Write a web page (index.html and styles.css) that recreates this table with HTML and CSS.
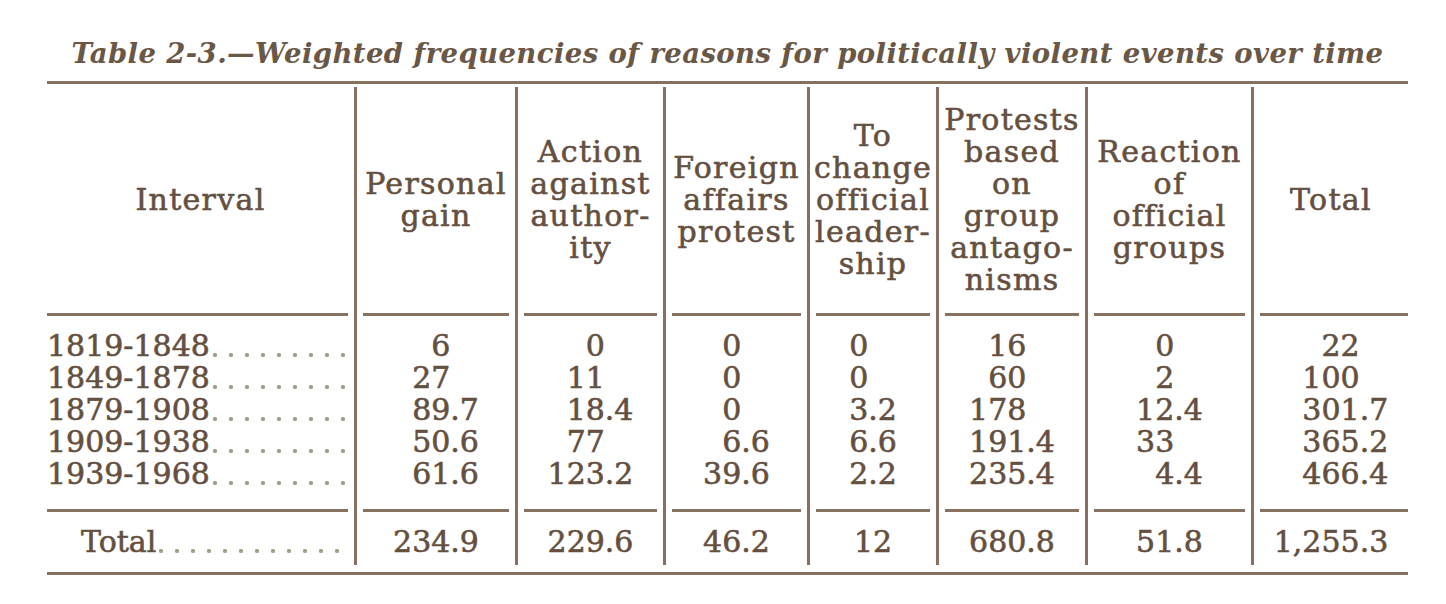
FILE: index.html
```html
<!DOCTYPE html>
<html lang="en">
<head>
<meta charset="utf-8">
<title>Table 2-3</title>
<link rel="stylesheet" href="styles.css">
</head>
<body>
<div class="page">
  <div class="title">Table 2-3.—Weighted frequencies of reasons for politically violent events over time</div>
  <div class="table">
    <div class="col c1">
      <div class="head">Interval</div>
      <div class="rule"></div>
      <div class="labels">
        <div class="lrow"><span>1819-1848</span><span class="lead"></span></div>
        <div class="lrow"><span>1849-1878</span><span class="lead"></span></div>
        <div class="lrow"><span>1879-1908</span><span class="lead"></span></div>
        <div class="lrow"><span>1909-1938</span><span class="lead"></span></div>
        <div class="lrow"><span>1939-1968</span><span class="lead"></span></div>
      </div>
      <div class="rule mid"></div>
      <div class="lrow tot"><span>Total</span><span class="lead"></span></div>
    </div>

    <div class="col c2">
      <div class="head">Personal<br>gain</div>
      <div class="rule"></div>
      <div class="nums">
        <span class="i">6</span><span class="f"></span>
        <span class="i">27</span><span class="f"></span>
        <span class="i">89</span><span class="f">.7</span>
        <span class="i">50</span><span class="f">.6</span>
        <span class="i">61</span><span class="f">.6</span>
        <div class="rule mid"></div>
        <span class="i">234</span><span class="f">.9</span>
      </div>
    </div>

    <div class="col c3">
      <div class="head">Action<br>against<br>author-<br>ity</div>
      <div class="rule"></div>
      <div class="nums">
        <span class="i">0</span><span class="f"></span>
        <span class="i">11</span><span class="f"></span>
        <span class="i">18</span><span class="f">.4</span>
        <span class="i">77</span><span class="f"></span>
        <span class="i">123</span><span class="f">.2</span>
        <div class="rule mid"></div>
        <span class="i">229</span><span class="f">.6</span>
      </div>
    </div>

    <div class="col c4">
      <div class="head">Foreign<br>affairs<br>protest</div>
      <div class="rule"></div>
      <div class="nums">
        <span class="i">0</span><span class="f"></span>
        <span class="i">0</span><span class="f"></span>
        <span class="i">0</span><span class="f"></span>
        <span class="i">6</span><span class="f">.6</span>
        <span class="i">39</span><span class="f">.6</span>
        <div class="rule mid"></div>
        <span class="i">46</span><span class="f">.2</span>
      </div>
    </div>

    <div class="col c5">
      <div class="head">To<br>change<br>official<br>leader-<br>ship</div>
      <div class="rule"></div>
      <div class="nums">
        <span class="i">0</span><span class="f"></span>
        <span class="i">0</span><span class="f"></span>
        <span class="i">3</span><span class="f">.2</span>
        <span class="i">6</span><span class="f">.6</span>
        <span class="i">2</span><span class="f">.2</span>
        <div class="rule mid"></div>
        <span class="whole">12</span>
      </div>
    </div>

    <div class="col c6">
      <div class="head">Protests<br>based<br>on<br>group<br>antago-<br>nisms</div>
      <div class="rule"></div>
      <div class="nums">
        <span class="i">16</span><span class="f"></span>
        <span class="i">60</span><span class="f"></span>
        <span class="i">178</span><span class="f"></span>
        <span class="i">191</span><span class="f">.4</span>
        <span class="i">235</span><span class="f">.4</span>
        <div class="rule mid"></div>
        <span class="i">680</span><span class="f">.8</span>
      </div>
    </div>

    <div class="col c7">
      <div class="head">Reaction<br>of<br>official<br>groups</div>
      <div class="rule"></div>
      <div class="nums">
        <span class="i">0</span><span class="f"></span>
        <span class="i">2</span><span class="f"></span>
        <span class="i">12</span><span class="f">.4</span>
        <span class="i">33</span><span class="f"></span>
        <span class="i">4</span><span class="f">.4</span>
        <div class="rule mid"></div>
        <span class="i">51</span><span class="f">.8</span>
      </div>
    </div>

    <div class="col c8">
      <div class="head">Total</div>
      <div class="rule"></div>
      <div class="nums">
        <span class="i">22</span><span class="f"></span>
        <span class="i">100</span><span class="f"></span>
        <span class="i">301</span><span class="f">.7</span>
        <span class="i">365</span><span class="f">.2</span>
        <span class="i">466</span><span class="f">.4</span>
        <div class="rule mid"></div>
        <span class="i">1,255</span><span class="f">.3</span>
      </div>
    </div>
  </div>
</div>
</body>
</html>
```

FILE: styles.css
```css
* { box-sizing: border-box; }

html, body {
  margin: 0;
  padding: 0;
  background: #ffffff;
}

body {
  font-family: "DejaVu Serif", "Liberation Serif", serif;
  color: #654f3f;
  font-size: 30px;
  line-height: 32px;
  -webkit-text-stroke: 0.6px #654f3f;
}

.page {
  width: 1446px;
  height: 604px;
  padding-left: 47px;
}

.title {
  width: 1361px;
  padding-top: 37px;
  margin-bottom: 12px;
  font-size: 27.5px;
  line-height: 32px;
  font-style: italic;
  font-weight: bold;
  text-align: center;
  letter-spacing: 0.4px;
  color: #6a5746;
  -webkit-text-stroke: 0;
  white-space: nowrap;
}

.table {
  display: flex;
  width: 1361px;
  border-top: 3px solid #86715f;
  border-bottom: 3px solid #86715f;
  padding: 3px 0 7px;
}

.col {
  display: flex;
  flex-direction: column;
  border-left: 3px solid #8a6f60;
}

.c1 { width: 307px; border-left: none; }
.c2 { width: 161px; }
.c3 { width: 148px; }
.c4 { width: 144px; }
.c5 { width: 129px; }
.c6 { width: 149px; }
.c7 { width: 166px; }
.c8 { width: 157px; }

.head {
  height: 226px;
  display: flex;
  align-items: center;
  justify-content: center;
  text-align: center;
  letter-spacing: 1.3px;
  white-space: nowrap;
}

.rule {
  height: 3px;
  margin: 0 6px;
  background: #87725f;
}

.c1 .rule { margin-left: 0; margin-right: 6px; }
.c8 .rule { margin-right: 0; }

.labels {
  padding-top: 14px;
}

.lrow {
  display: flex;
  height: 32px;
  white-space: nowrap;
}

.lead {
  flex: 1;
  margin: 0 8px 0 0;
  background-image: radial-gradient(circle, #a4a08a 1.9px, rgba(255,255,255,0) 2.4px);
  background-size: 16px 6px;
  background-repeat: repeat-x;
  background-position: left -3px bottom 4px;
}

.rule.mid {
  margin-top: 19px;
  margin-bottom: 13.6px;
}

.tot {
  padding-left: 34px;
  margin-bottom: 7.4px;
}

.nums {
  display: grid;
  grid-template-columns: 1fr auto auto 1fr;
  padding-top: 14px;
  padding-bottom: 7.4px;
  white-space: nowrap;
}

.nums .i {
  grid-column: 2;
  text-align: right;
  height: 32px;
}

.nums .f {
  grid-column: 3;
  text-align: left;
  height: 32px;
}

.nums .whole {
  grid-column: 1 / -1;
  text-align: center;
  height: 32px;
}

.nums .rule.mid {
  grid-column: 1 / -1;
}
```
